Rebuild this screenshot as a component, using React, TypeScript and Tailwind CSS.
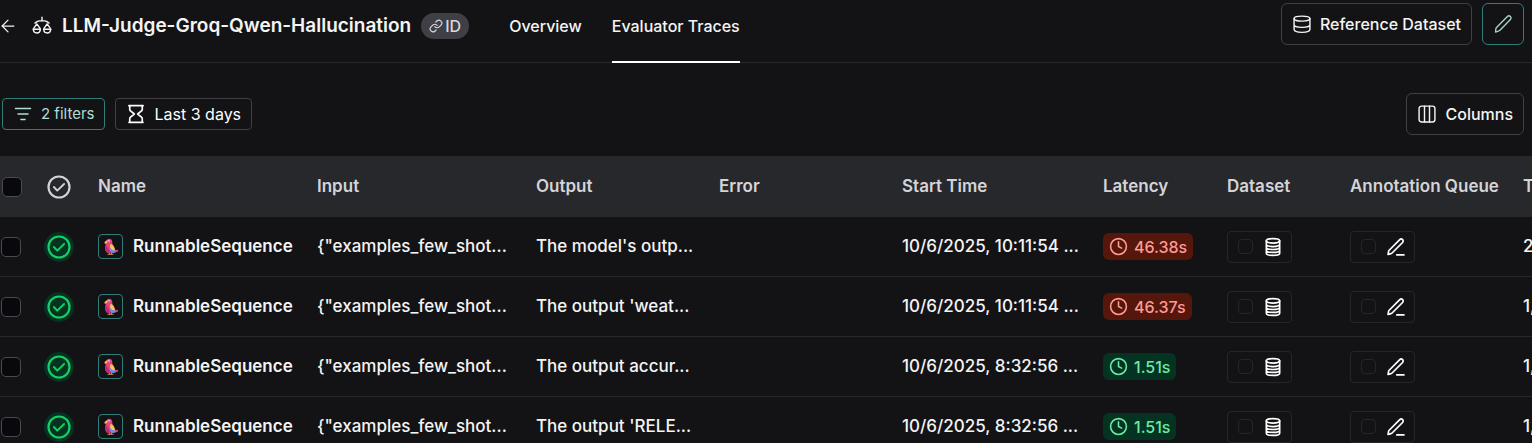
import type { ReactNode } from "react";
import { ArrowLeft, Clock, Link as LinkIcon } from "lucide-react";

type Run = { output: string; start: string; latency: string; slow: boolean; tokens: string };

const runs: Run[] = [
  { output: "The model's outp...", start: "10/6/2025, 10:11:54 ...", latency: "46.38s", slow: true, tokens: "2" },
  { output: "The output 'weat...", start: "10/6/2025, 10:11:54 ...", latency: "46.37s", slow: true, tokens: "1," },
  { output: "The output accur...", start: "10/6/2025, 8:32:56 ...", latency: "1.51s", slow: false, tokens: "1," },
  { output: "The output 'RELE...", start: "10/6/2025, 8:32:56 ...", latency: "1.51s", slow: false, tokens: "1," },
];

function Svg({ className, width = 2, children }: { className: string; width?: number; children: ReactNode }) {
  return (
    <svg viewBox="0 0 24 24" className={className} fill="none" stroke="currentColor" strokeWidth={width} strokeLinecap="round" strokeLinejoin="round" aria-hidden="true">
      {children}
    </svg>
  );
}

function ScalesIcon() {
  return (
    <Svg className="size-5 shrink-0" width={1.7}>
      <path d="M12 1.500v4.500M3.500 8.500 6.500 6.500c.8-.5 1.500-.7 2.500-.7h6c1 0 1.700.2 2.500.7l3 2" />
      <path d="M1.600 15.800h8.400M14 15.800h8.400" />
      <path d="M5.800 9.500 2.200 14.500c-.5.700-.7 1.300-.6 2 .3 2.300 2 3.900 4.200 3.900s3.900-1.600 4.200-3.900c.1-.7-.1-1.300-.6-2zM18.200 9.500l-3.600 5c-.5.700-.7 1.300-.6 2 .3 2.300 2 3.900 4.200 3.900s3.900-1.600 4.200-3.900c.1-.7-.1-1.300-.6-2z" />
    </Svg>
  );
}

function DatabaseIcon() {
  return (
    <Svg className="size-5" width={1.7}>
      <path d="M2.500 5.500C2.500 3.200 6 2.500 12 2.500s9.500.7 9.500 3-3.500 3-9.500 3-9.500-.7-9.500-3z" />
      <path d="M2.500 5.500v12.800c0 2.500 3.500 3.700 9.500 3.700s9.500-1.200 9.500-3.700V5.500M2.500 13c0 2 3.500 3 9.500 3s9.500-1 9.500-3" />
    </Svg>
  );
}

function StackIcon() {
  return (
    <Svg className="size-5" width={2}>
      <ellipse cx="12" cy="4.600" rx="8" ry="2.700" />
      <path d="M4 4.600v14.800c0 1.500 3.600 2.700 8 2.700s8-1.200 8-2.700V4.600M4 8.800c0 1.500 3.600 2.700 8 2.700s8-1.200 8-2.700M4 12.300c0 1.500 3.600 2.700 8 2.700s8-1.200 8-2.700M4 15.800c0 1.500 3.600 2.700 8 2.700s8-1.200 8-2.700" />
    </Svg>
  );
}

function PencilIcon() {
  return (
    <Svg className="size-5" width={1.6}>
      <path d="m2.500 21.500.5-4.200c.1-.6.3-1 .7-1.400L16.800 2.800a2.500 2.500 0 0 1 3.600 3.600L7.500 19.500c-.4.5-.9.700-1.500.8z" transform="translate(.5 .2)" />
    </Svg>
  );
}

function EditLineIcon() {
  return (
    <Svg className="size-5" width={2}>
      <path d="M13 21.500h8.500M2.500 21l.6-3.700c.1-.6.3-1 .7-1.400L16.500 3.200a2.400 2.400 0 0 1 3.400 3.400L7.300 19.200c-.4.400-.8.600-1.400.7z" />
    </Svg>
  );
}

function HourglassIcon() {
  return (
    <Svg className="size-5" width={2}>
      <path d="M3.500 2h17M3.500 22h17M4.500 2v4.500c0 .8.300 1.300.9 1.800L10 12l-4.600 3.700c-.6.500-.9 1-.9 1.800V22M19.500 2v4.500c0 .8-.3 1.300-.9 1.800L14 12l4.600 3.700c.6.500.9 1 .9 1.800V22" />
    </Svg>
  );
}

function FilterIcon() {
  return (
    <Svg className="size-5" width={1.8}>
      <path d="M3 5.500h18M6 12h12M9.500 18.500h5" />
    </Svg>
  );
}

function ColumnsIcon() {
  return (
    <Svg className="size-5" width={1.7}>
      <rect x="2.500" y="2.500" width="19" height="19" rx="3" />
      <path d="M9 2.500v19M15 2.500v19" />
    </Svg>
  );
}

function CheckIcon() {
  return (
    <Svg className="size-[26px]">
      <circle cx="12" cy="12" r="9.700" />
      <path d="m7.300 12 3.100 3.300 6.300-6.100" strokeWidth="1.700" />
    </Svg>
  );
}

function ParrotIcon() {
  return (
    <svg viewBox="0 0 14 17" className="h-[17px] w-3.5" aria-hidden="true">
      <path d="M2 4.500C2 2 3.500.8 5.200.8 7.300.8 8.300 2.300 8.300 4.500L8.600 7.500l3 4.800 2.200-.5c.3 1.500 0 2-1 2.300L8 15.300H5.200C2.300 15 1 12.500 1 10c0-2 1-3.500 1-5.500z" fill="#ec3f83" />
      <path d="M2.200 7.500c2 1.500 2.500 4.500 5.300 7.700H5.200C2.300 15 1 12.500 1 10c0-1 .5-2 1.200-2.500z" fill="#b92c77" />
      <path d="M6.500 6c2.500.3 4 2.200 4.600 6.500-2.500.5-4.600-1-5-3.300C5.900 8 6 7 6.500 6z" fill="#fdc648" />
      <path d="M5.500 9.300c1 2 2.700 3.200 5.600 3.200l.4 1.700-3 .9C6.500 14 5.300 11.800 5.500 9.300z" fill="#5b93f5" />
      <path d="M3.500 2.500C2 2.300.8 3.300.3 5.200l1.400.6C2.800 5.200 3.700 4.300 3.500 2.500z" fill="#f7c052" />
      <circle cx="4.800" cy="3.200" r="1.100" fill="#f7d5e2" />
      <circle cx="4.800" cy="3.200" r=".5" fill="#3a2530" />
      <path d="M3.500 16.300h6M5.500 15v1.300M7.500 15v1.300" stroke="#d3964a" strokeWidth=".9" />
    </svg>
  );
}

function Checkbox({ label }: { label: string }) {
  return (
    <input type="checkbox" aria-label={label} className="block size-5 appearance-none rounded-[5px] border border-[#4a4a51] bg-[#09090d] checked:bg-teal-700" />
  );
}

function QuickAdd({ label, children }: { label: string; children: ReactNode }) {
  return (
    <div className="inline-flex h-8 items-center gap-2.5 rounded border border-[#26262a] pr-2 pl-2.5 align-middle">
      <input type="checkbox" disabled aria-label={label} className="size-[15px] appearance-none rounded border border-[#26262a]" />
      <button type="button" aria-label={label} className="flex text-white">{children}</button>
    </div>
  );
}

const headings = ["Name", "Input", "Output", "Error", "Start Time", "Latency", "Dataset", "Annotation Queue", "T"];

export default function App() {
  return (
    <div className="flex h-screen flex-col overflow-hidden bg-[#131315] font-['Inter',sans-serif] text-base font-medium text-[#f4f4f5]">
      <header className="flex shrink-0 items-stretch justify-between border-b border-[#28282b]">
        <div className="flex items-stretch">
          <div className="flex items-center pb-2.5">
            <a href="#back" aria-label="Back" className="-ml-0.5 mr-3.5"><ArrowLeft className="size-5" strokeWidth={1.5} /></a>
            <ScalesIcon />
            <h1 className="ml-2.5 text-[19px] font-semibold whitespace-nowrap">LLM-Judge-Groq-Qwen-Hallucination</h1>
            <button type="button" className="ml-2.5 flex h-[26px] items-center gap-0.5 rounded-full bg-[#3f3f46] px-2 text-[#d8d8dd]">
              <LinkIcon className="size-3.5" strokeWidth={2} />ID
            </button>
          </div>
          <nav className="ml-10 flex gap-[30px] whitespace-nowrap">
            <a href="#overview" className="flex items-center pb-2.5">Overview</a>
            <a href="#traces" className="-mb-px flex items-center border-b-2 border-white pb-2.5">Evaluator Traces</a>
          </nav>
        </div>
        <div className="flex gap-2.5 pt-[3px] pr-2 pb-[17px] whitespace-nowrap">
          <button type="button" className="flex h-[42px] items-center gap-2 rounded-md border border-[#3f3f45] px-2.5"><DatabaseIcon />Reference Dataset</button>
          <button type="button" aria-label="Edit" className="flex size-[42px] items-center justify-center rounded-md border border-[#2f7e79] text-[#a9d5cc]"><PencilIcon /></button>
        </div>
      </header>

      <div className="flex shrink-0 items-center justify-between pt-[30px] pr-2 pb-[21px] pl-0.5 whitespace-nowrap">
        <div className="flex gap-2.5">
          <button type="button" className="flex h-8 items-center gap-2 rounded border border-[#2f7e79] px-2.5 text-[15px] font-normal text-[#b0dcd4]"><FilterIcon />2 filters</button>
          <button type="button" className="flex h-8 items-center gap-2 rounded border border-[#3f3f45] px-2.5 font-normal text-white"><HourglassIcon />Last 3 days</button>
        </div>
        <button type="button" className="flex h-[42px] items-center gap-2 rounded-md border border-[#3f3f45] px-2.5"><ColumnsIcon />Columns</button>
      </div>

      <main className="min-h-0 overflow-hidden">
        <table className="w-[1632px] table-fixed border-separate border-spacing-0 text-left text-[17px] whitespace-nowrap">
          <colgroup>
            <col className="w-[46px]" />
            <col className="w-[42px]" />
            <col className="w-[219px]" />
            <col className="w-[219px]" />
            <col className="w-[183px]" />
            <col className="w-[183px]" />
            <col className="w-[201px]" />
            <col className="w-[124px]" />
            <col className="w-[123px]" />
            <col className="w-[173px]" />
            <col />
          </colgroup>
          <thead className="bg-[#27282b] text-[#d4d4d8]">
            <tr className="h-[61px]">
              <th className="pl-0.5"><Checkbox label="Select all runs" /></th>
              <th aria-label="Status"><CheckIcon /></th>
              {headings.map((h) => (
                <th key={h} className="pl-2.5 font-semibold">{h}</th>
              ))}
            </tr>
          </thead>
          <tbody>
            {runs.map((run, i) => (
              <tr key={i} className="h-[60px] *:border-b *:border-[#28282b]">
                <td className="pl-px"><Checkbox label={"Select run " + (i + 1)} /></td>
                <td>
                  <span className="-ml-0.5 flex size-[30px] items-center justify-center rounded-full bg-[#063321] text-[#16cf68]"><CheckIcon /></span>
                </td>
                <td className="pl-2.5 font-semibold">
                  <div className="flex items-center gap-2.5">
                    <span className="flex size-[25px] shrink-0 items-center justify-center rounded border border-[#2f7e79]"><ParrotIcon /></span>
                    RunnableSequence
                  </div>
                </td>
                <td className="pl-2.5">{'{"examples_few_shot...'}</td>
                <td className="pl-2.5">{run.output}</td>
                <td />
                <td className="pl-2.5">{run.start}</td>
                <td className="pl-2.5">
                  <span className={`inline-flex h-[27px] items-center gap-1.5 rounded-md px-1.5 align-middle text-base ${run.slow ? "bg-[#55160c] text-[#ff9b93]" : "bg-[#053321] text-[#6ce9a6]"}`}>
                    <Clock className="size-[19px]" strokeWidth={2} />
                    {run.latency}
                  </span>
                </td>
                <td className="pl-2.5"><QuickAdd label="Add to dataset"><StackIcon /></QuickAdd></td>
                <td className="pl-2.5"><QuickAdd label="Add to annotation queue"><EditLineIcon /></QuickAdd></td>
                <td className="pl-2.5">{run.tokens}</td>
              </tr>
            ))}
          </tbody>
        </table>
      </main>
    </div>
  );
}
